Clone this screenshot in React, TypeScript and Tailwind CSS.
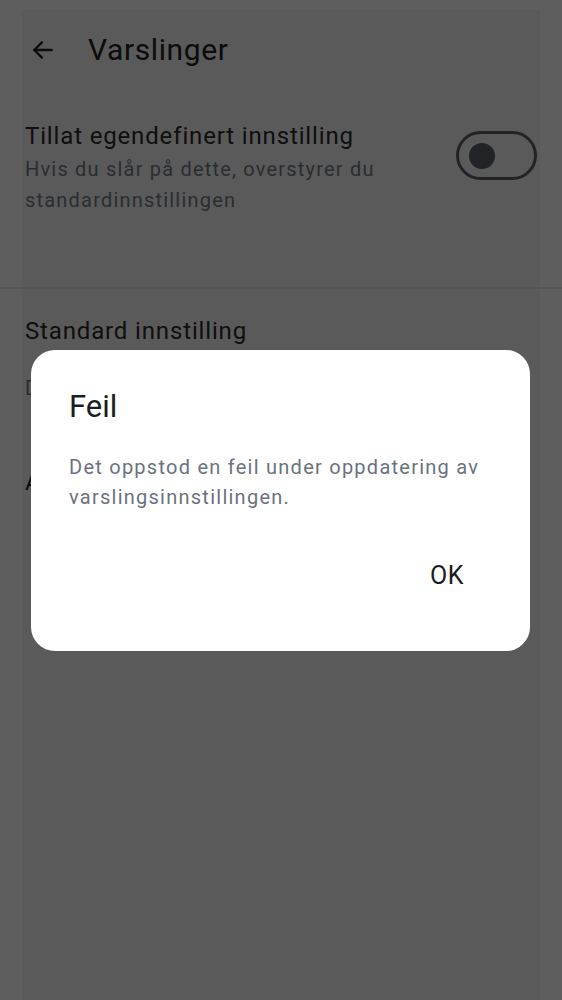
import React from "react";

export default function App() {
  return (
    <div
      className="relative h-[1000px] w-[562px] overflow-hidden bg-white"
      style={{ fontFamily: "Roboto, 'Noto Sans', sans-serif" }}
    >
      {/* underlying page */}
      <div className="flex h-full flex-col px-[22px] pt-[10px]">
        <div className="flex flex-1 flex-col bg-[#f5f5f5]">
          {/* header */}
          <div className="flex h-[80px] items-center">
            <svg
              className="ml-[8px] h-[26px] w-[26px] text-[#222]"
              viewBox="0 0 24 24"
              fill="none"
              stroke="currentColor"
              strokeWidth="2.2"
              strokeLinecap="round"
              strokeLinejoin="round"
            >
              <path d="M20 12H4" />
              <path d="M11 5l-7 7 7 7" />
            </svg>
            <span className="ml-[32px] text-[30px] leading-[36px] tracking-[0.6px] text-[#222]">Varslinger</span>
          </div>
          {/* custom setting row */}
          <div className="flex items-start pl-[3px] pr-[3px] pt-[30px]">
            <div className="flex-1">
              <div className="text-[24px] leading-[32px] tracking-[0.85px] text-[#2a2a2a]">Tillat egendefinert innstilling</div>
              <div className="mt-[2px] text-[20px] leading-[31px] tracking-[1.2px] text-[#747a84]">
                Hvis du slår på dette, overstyrer du
                <br />
                standardinnstillingen
              </div>
            </div>
            <div className="mt-[11px] flex h-[49px] w-[81px] items-center rounded-full border-[3px] border-[#5a6068] pl-[10px]">
              <div className="h-[26px] w-[26px] rounded-full bg-[#5a6068]" />
            </div>
          </div>
          <div className="-mx-[22px] mt-[71px] h-[2px] bg-[#e6e6e6]" />
          <div className="pl-[3px] pt-[26px]">
            <div className="text-[24px] leading-[32px] tracking-[0.85px] text-[#2a2a2a]">Standard innstilling</div>
            <div className="mt-[26px] text-[20px] leading-[31px] tracking-[1.2px] text-[#747a84]">Daglig oppsummering</div>
            <div className="mt-[62px] text-[24px] leading-[32px] tracking-[0.85px] text-[#2a2a2a]">Avansert</div>
          </div>
        </div>
      </div>

      {/* overlay */}
      <div className="absolute inset-0 flex items-center justify-center bg-[rgba(0,0,0,0.63)]">
        <div className="ml-[-1px] w-[499px] rounded-[24px] bg-white pb-[61px] pl-[38px] pr-[38px] pt-[39px]">
          <div className="text-[31px] leading-[36px] text-[#1c1d21]">Feil</div>
          <div className="mt-[27px] text-[20px] leading-[30px] tracking-[1.25px] text-[#6b7280]">
            Det oppstod en feil under oppdatering av varslingsinnstillingen.
          </div>
          <div className="mt-[50px] flex justify-end pr-[28px]">
            <span className="text-[25px] leading-[28px] tracking-[0.5px] text-[#1c1d21]">OK</span>
          </div>
        </div>
      </div>
    </div>
  );
}
